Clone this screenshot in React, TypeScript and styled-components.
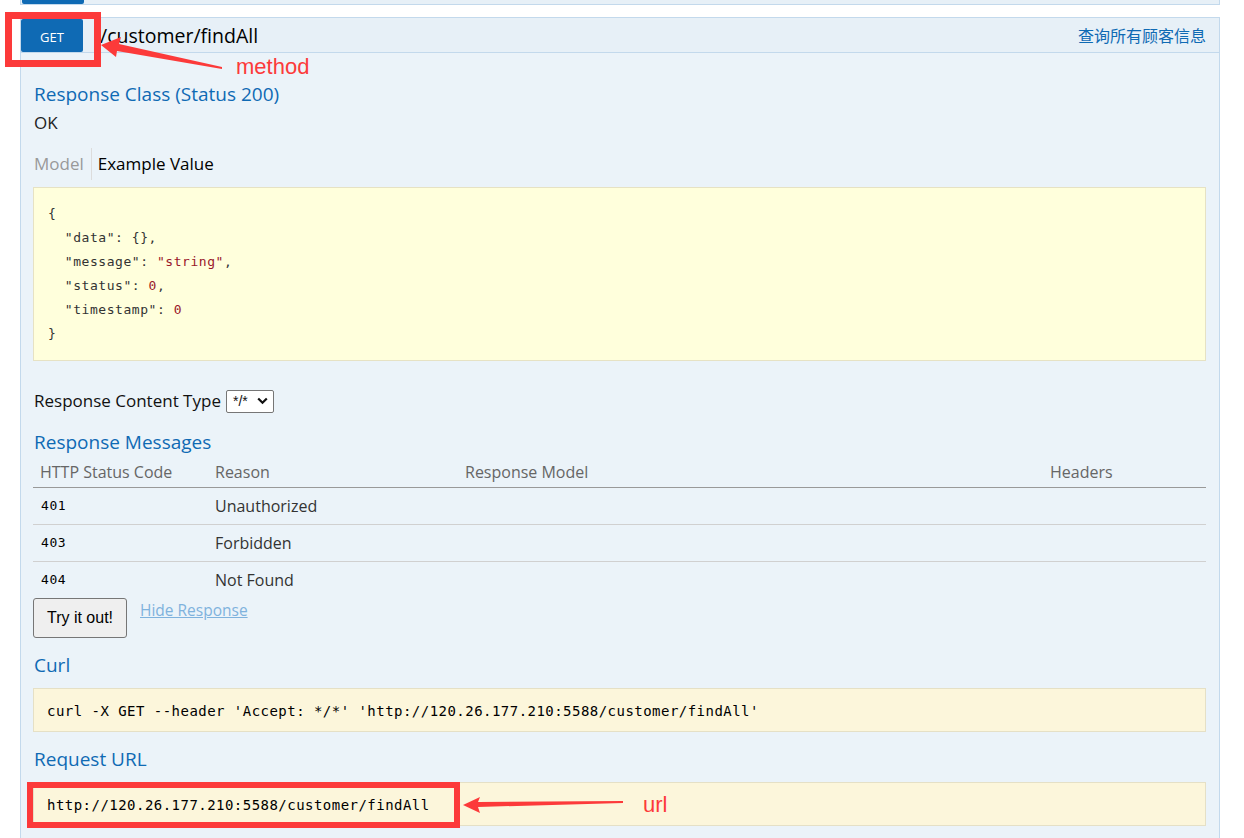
import React from 'react';
import styled, { createGlobalStyle } from 'styled-components';

const GlobalStyle = createGlobalStyle`
  html, body {
    margin: 0;
    padding: 0;
    background: #fff;
    overflow: hidden;
  }
  body {
    font-family: 'Open Sans', 'Noto Sans', sans-serif;
    color: #000;
  }
`;

const blue = '#0f6ab4';
const border = '#c3d9ec';

const responseRows = [
  { code: '401', reason: 'Unauthorized' },
  { code: '403', reason: 'Forbidden' },
  { code: '404', reason: 'Not Found' },
];

const curlText =
  "curl -X GET --header 'Accept: */*' 'http://120.26.177.210:5588/customer/findAll'";
const requestUrl = 'http://120.26.177.210:5588/customer/findAll';

export default function App() {
  return (
    <>
      <GlobalStyle />
      <Page>
        <PrevOperation>
          <PrevMethod />
        </PrevOperation>

        <Operation>
          <Heading>
            <MethodButton>GET</MethodButton>
            <Path>/customer/findAll</Path>
            <Summary>查询所有顾客信息</Summary>
          </Heading>

          <Content>
            <SectionTitle $top={29}>Response Class (Status 200)</SectionTitle>
            <StatusText>OK</StatusText>

            <Tabs>
              <Tab $active={false}>Model</Tab>
              <Tab $active>Example Value</Tab>
            </Tabs>

            <JsonBlock>
              <div>{'{'}</div>
              <div>
                {'  '}<Key>"data"</Key>: {'{}'},
              </div>
              <div>
                {'  '}<Key>"message"</Key>: <Str>"string"</Str>,
              </div>
              <div>
                {'  '}<Key>"status"</Key>: <Num>0</Num>,
              </div>
              <div>
                {'  '}<Key>"timestamp"</Key>: <Num>0</Num>
              </div>
              <div>{'}'}</div>
            </JsonBlock>

            <ContentTypeRow>
              <span>Response Content Type</span>
              <FakeSelect>
                <span>*/*</span>
                <svg width="11" height="8" viewBox="0 0 11 8">
                  <path
                    d="M1.2 1.5 L5.5 5.8 L9.8 1.5"
                    fill="none"
                    stroke="#111"
                    strokeWidth="2.2"
                  />
                </svg>
              </FakeSelect>
            </ContentTypeRow>

            <SectionTitle $top={17}>Response Messages</SectionTitle>
            <MessagesTable>
              <HeaderRow>
                <HeaderCell>HTTP Status Code</HeaderCell>
                <HeaderCell>Reason</HeaderCell>
                <HeaderCell>Response Model</HeaderCell>
                <HeaderCell>Headers</HeaderCell>
              </HeaderRow>
              {responseRows.map((r, i) => (
                <BodyRow key={r.code} $last={i === responseRows.length - 1}>
                  <CodeCell>{r.code}</CodeCell>
                  <Cell>{r.reason}</Cell>
                  <Cell />
                  <Cell />
                </BodyRow>
              ))}
            </MessagesTable>

            <Actions>
              <TryButton>Try it out!</TryButton>
              <HideLink href="#">Hide Response</HideLink>
            </Actions>

            <SectionTitle $top={15}>Curl</SectionTitle>
            <Block>{curlText}</Block>

            <SectionTitle $top={15}>Request URL</SectionTitle>
            <Block>{requestUrl}</Block>
          </Content>
        </Operation>

        {/* red annotations drawn over the screenshot */}
        <MarkBox $left={5} $top={12} $w={96} $h={55} $b={7} />
        <Arrows width="1244" height="838" viewBox="0 0 1244 838">
          <polygon
            points="101,45 121,37 119,44 222,67 222,69 117,51 116,57"
            fill="#fc3a3a"
          />
          <polygon
            points="463,805 480,797 478,802 623,801 623,803 478,807 480,813"
            fill="#fc3a3a"
          />
        </Arrows>
        <MarkLabel $left={236} $top={53}>method</MarkLabel>
        <MarkBox $left={27} $top={782} $w={433} $h={46} $b={6} />
        <MarkLabel $left={643} $top={791}>url</MarkLabel>
      </Page>
    </>
  );
}

const Page = styled.div`
  position: relative;
  width: 1244px;
  height: 838px;
  overflow: hidden;
  padding-left: 20px;
  box-sizing: border-box;
`;

const PrevOperation = styled.div`
  width: 1200px;
  height: 5px;
  box-sizing: border-box;
  background: #e7f0f7;
  border: 1px solid ${border};
  border-top: none;
  padding-left: 1px;
`;

const PrevMethod = styled.div`
  width: 62px;
  height: 4px;
  background: ${blue};
  border-radius: 0 0 2px 2px;
`;

const Operation = styled.div`
  margin-top: 12px;
  width: 1200px;
  box-sizing: border-box;
  border: 1px solid ${border};
  background: #ebf3f9;
  height: 900px;
`;

const Heading = styled.div`
  display: flex;
  align-items: flex-start;
  height: 35px;
  box-sizing: border-box;
  background: #e7f0f7;
  border-bottom: 1px solid ${border};
`;

const MethodButton = styled.div`
  margin: 1px 0 0 0;
  width: 62px;
  height: 33px;
  border-radius: 2px;
  background: ${blue};
  color: #fff;
  font-size: 13px;
  display: flex;
  align-items: center;
  justify-content: center;
  padding-top: 2px;
  box-sizing: border-box;
`;

const Path = styled.div`
  margin-left: 17px;
  font-size: 19.5px;
  line-height: 35px;
  color: #000;
`;

const Summary = styled.div`
  margin-left: auto;
  margin-right: 13px;
  font-family: 'Noto Sans CJK SC', sans-serif;
  font-size: 16px;
  line-height: 35px;
  color: ${blue};
`;

const Content = styled.div`
  display: flex;
  flex-direction: column;
  padding: 0 13px 0 12px;
`;

const SectionTitle = styled.h4<{ $top: number }>`
  margin: ${(p) => p.$top}px 0 0 1px;
  font-size: 19px;
  font-weight: 400;
  line-height: 24px;
  color: ${blue};
`;

const StatusText = styled.div`
  margin: 5px 0 0 1px;
  font-size: 17px;
  line-height: 24px;
  color: #222;
`;

const Tabs = styled.div`
  margin-top: 13px;
  display: flex;
  height: 32px;
  align-items: center;
`;

const Tab = styled.div<{ $active: boolean }>`
  font-size: 17px;
  line-height: 32px;
  color: ${(p) => (p.$active ? '#000' : '#999')};
  padding: ${(p) => (p.$active ? '0 0 0 6px' : '0 7px 0 1px')};
  border-left: ${(p) => (p.$active ? '1px solid #dcdcdc' : 'none')};
`;

const mono = `'DejaVu Sans Mono', 'Liberation Mono', monospace`;

const JsonBlock = styled.pre`
  margin: 7px 0 0 0;
  height: 174px;
  box-sizing: border-box;
  padding: 14px 14px 14px 14px;
  background: #ffffdc;
  border: 1px solid #e6e2c4;
  font-family: ${mono};
  font-size: 13px;
  letter-spacing: 0.55px;
  line-height: 24px;
  color: #333;
  white-space: pre;
`;

const Key = styled.span`
  color: #333;
`;

const Str = styled.span`
  color: #99172a;
`;

const Num = styled.span`
  color: #99172a;
`;

const ContentTypeRow = styled.div`
  margin: 28px 0 0 1px;
  display: flex;
  align-items: center;
  gap: 5px;
  height: 24px;
  font-size: 17px;
  line-height: 24px;
  color: #111;
`;

const FakeSelect = styled.div`
  display: flex;
  align-items: center;
  gap: 9px;
  height: 23px;
  box-sizing: border-box;
  padding: 0 5px 0 6px;
  border: 1px solid #767676;
  border-radius: 2px;
  background: #fff;
  font-family: 'Liberation Sans', Arial, sans-serif;
  font-size: 14px;
  color: #111;
`;

const MessagesTable = styled.div`
  margin-top: 4px;
  display: flex;
  flex-direction: column;
`;

const columns = `175px 250px 585px 1fr`;

const HeaderRow = styled.div`
  display: grid;
  grid-template-columns: ${columns};
  height: 30px;
  box-sizing: border-box;
  border-bottom: 1px solid #999;
`;

const HeaderCell = styled.div`
  padding-left: 7px;
  font-size: 16px;
  line-height: 28px;
  color: #666;
`;

const BodyRow = styled.div<{ $last: boolean }>`
  display: grid;
  grid-template-columns: ${columns};
  align-items: center;
  height: ${(p) => (p.$last ? 36 : 37)}px;
  box-sizing: border-box;
  border-bottom: ${(p) => (p.$last ? 'none' : '1px solid #d0d0d0')};
`;

const Cell = styled.div`
  padding-left: 7px;
  font-size: 16px;
  line-height: 24px;
  color: #333;
`;

const CodeCell = styled(Cell)`
  padding-left: 8px;
  font-family: ${mono};
  font-size: 13px;
  letter-spacing: 0.55px;
  color: #000;
`;

const Actions = styled.div`
  display: flex;
  align-items: flex-start;
  gap: 13px;
`;

const TryButton = styled.button`
  width: 94px;
  height: 40px;
  padding: 0;
  background: #efefef;
  border: 1px solid #767676;
  border-radius: 3px;
  font-family: 'Liberation Sans', Arial, sans-serif;
  font-size: 16px;
  color: #000;
`;

const HideLink = styled.a`
  font-size: 15.5px;
  line-height: 24px;
  color: #7fb2dd;
  text-decoration: underline;
`;

const Block = styled.pre`
  margin: 11px 0 0 0;
  height: 44px;
  box-sizing: border-box;
  padding: 1px 13px 0 13px;
  display: flex;
  align-items: center;
  background: #fcf6db;
  border: 1px solid #e5e0c6;
  font-family: ${mono};
  font-size: 14px;
  letter-spacing: 0.47px;
  color: #000;
`;

const MarkBox = styled.div<{ $left: number; $top: number; $w: number; $h: number; $b: number }>`
  position: absolute;
  left: ${(p) => p.$left}px;
  top: ${(p) => p.$top}px;
  width: ${(p) => p.$w}px;
  height: ${(p) => p.$h}px;
  box-sizing: border-box;
  border: ${(p) => p.$b}px solid #fc3a3a;
`;

const Arrows = styled.svg`
  position: absolute;
  left: 0;
  top: 0;
  pointer-events: none;
`;

const MarkLabel = styled.div<{ $left: number; $top: number }>`
  position: absolute;
  left: ${(p) => p.$left}px;
  top: ${(p) => p.$top}px;
  font-family: 'Liberation Sans', Arial, sans-serif;
  font-size: 22px;
  line-height: 28px;
  color: #fc3a3a;
`;
